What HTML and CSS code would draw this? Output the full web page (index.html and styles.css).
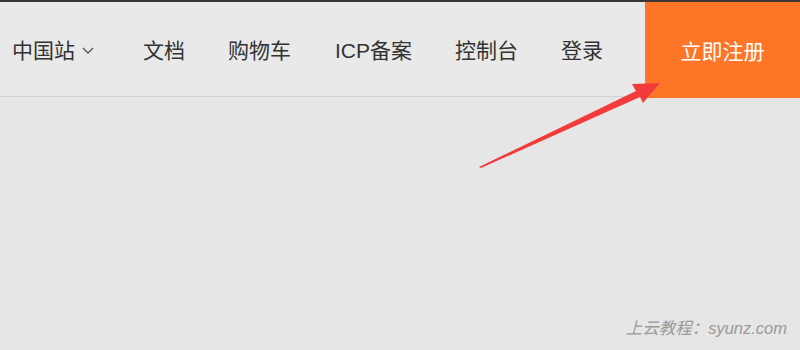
FILE: index.html
```html
<!DOCTYPE html>
<html lang="zh-CN">
<head>
  <meta charset="UTF-8" />
  <meta name="viewport" content="width=device-width, initial-scale=1.0" />
  <title>中国站</title>
  <link rel="stylesheet" href="styles.css">
</head>
<body>
  <header class="topbar">
    <nav class="nav">
      <a class="nav-item site" href="#">中国站<svg class="chevron" viewBox="0 0 12 7" width="12" height="7"><path d="M1 1 L6 6 L11 1" fill="none" stroke="#555" stroke-width="1.3"/></svg></a>
      <a class="nav-item" href="#">文档</a>
      <a class="nav-item" href="#">购物车</a>
      <a class="nav-item icp" href="#">ICP备案</a>
      <a class="nav-item" href="#">控制台</a>
      <a class="nav-item" href="#">登录</a>
    </nav>
    <a class="register" href="#">立即注册</a>
  </header>

  <svg class="arrow" viewBox="0 0 800 350" width="800" height="350">
    <polygon points="479,167 481,168 640,97 643,103 660,83 632,84 636,91" fill="#f33b3b"/>
  </svg>

  <div class="watermark">上云教程：syunz.com</div>
</body>
</html>
```

FILE: styles.css
```css
html, body {
  margin: 0;
  padding: 0;
}
body {
  width: 800px;
  height: 350px;
  background: #e6e6e6;
  font-family: "Liberation Sans", "Noto Sans CJK SC", sans-serif;
  color: #333;
  position: relative;
  overflow: hidden;
  border-top: 2px solid #383838;
  box-sizing: border-box;
}
.topbar {
  display: flex;
  align-items: flex-start;
}
.nav {
  flex: 1;
  height: 94px;
  display: flex;
  align-items: center;
  gap: 43px;
  padding-left: 12px;
  background: #e9e9e9;
  border-bottom: 1px solid #d2d2d2;
}
.nav-item {
  font-size: 21px;
  color: #333;
  text-decoration: none;
  white-space: nowrap;
}
.site {
  display: flex;
  align-items: center;
  margin-right: 6px;
}
.icp {
  margin-left: 1px;
}
.chevron {
  margin-left: 7px;
  margin-top: 2px;
}
.register {
  width: 155px;
  height: 96px;
  background: #fd7628;
  color: #fff;
  font-size: 21px;
  text-decoration: none;
  display: flex;
  align-items: center;
  justify-content: center;
}
.arrow {
  position: absolute;
  left: 0;
  top: -2px;
}
.watermark {
  position: absolute;
  right: 13px;
  bottom: 11px;
  font-size: 16.5px;
  font-style: italic;
  color: #9a9a9a;
}
```
